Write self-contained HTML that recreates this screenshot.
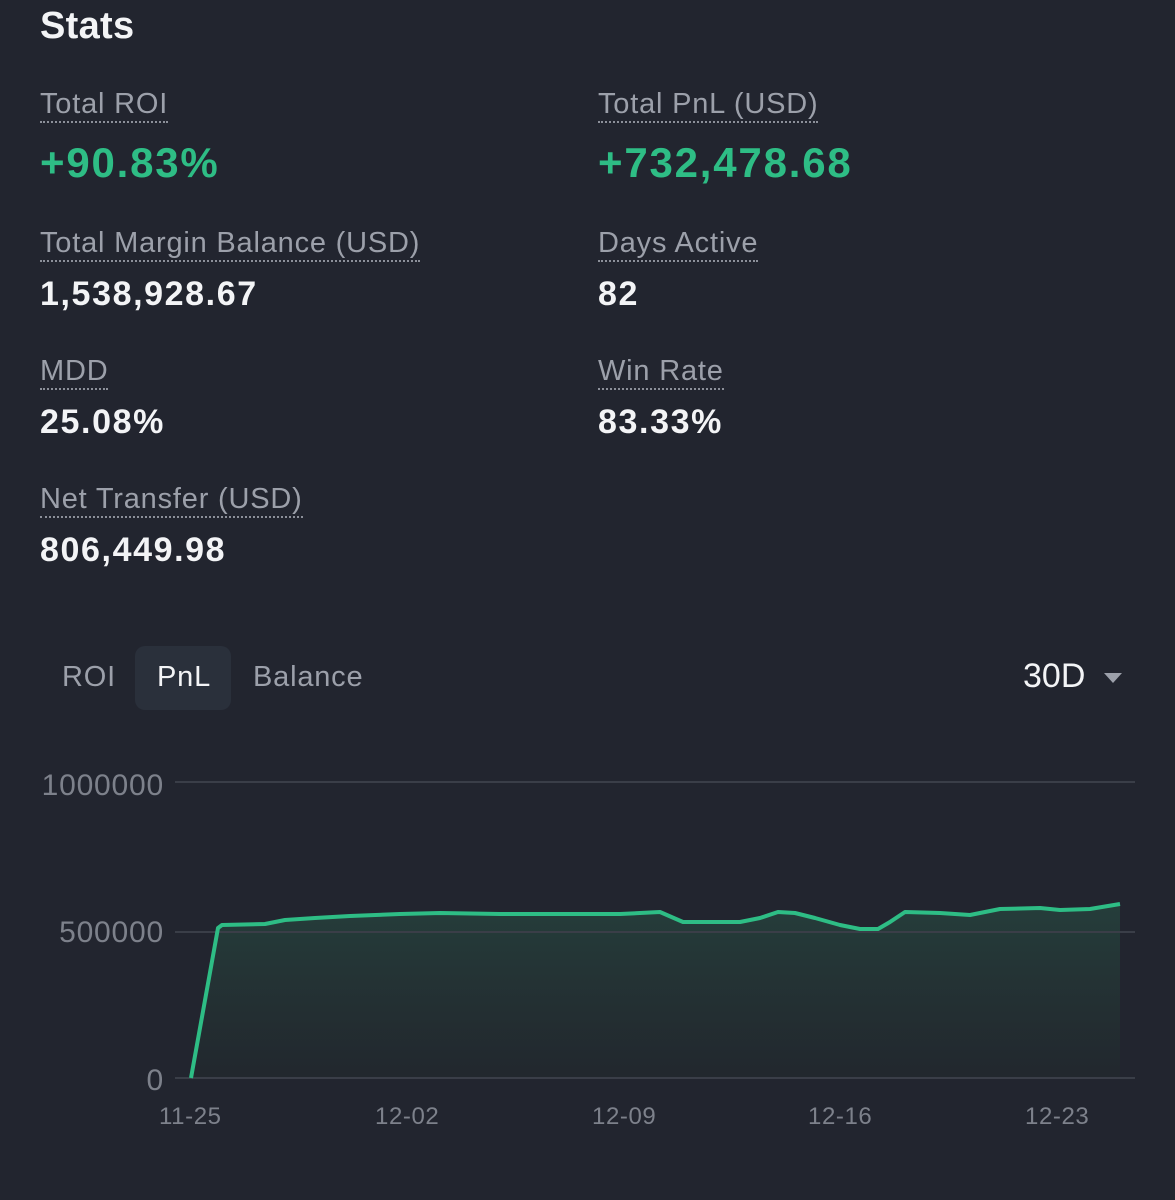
<!DOCTYPE html>
<html><head><meta charset="utf-8"><style>
body{margin:0;width:1175px;height:1200px;background:#22252f;font-family:"Liberation Sans",sans-serif;position:relative;overflow:hidden}
.a{position:absolute;white-space:nowrap}
.t{color:#f3f4f6;font-weight:bold;font-size:38px;left:40px;top:5px;letter-spacing:0.3px}
.l{color:#9ca0aa;font-size:29px;border-bottom:2px dotted #8c909a;line-height:30px;padding-bottom:2px;letter-spacing:0.8px}
.v{color:#f3f4f6;font-size:34px;font-weight:bold;letter-spacing:1.6px}
.g{color:#2ebd85;font-size:42px;font-weight:bold;letter-spacing:1.8px}
.tab{font-size:29px;color:#9ca0aa;letter-spacing:0.8px}
.ax{font-size:30px;color:#7d818b;letter-spacing:0.8px}
.xl{font-size:24px;color:#7d818b;letter-spacing:0.6px}
</style></head><body>
<div class="a t">Stats</div>
<div class="a l" style="left:40px;top:89px">Total ROI</div>
<div class="a g" style="left:40px;top:139px">+90.83%</div>
<div class="a l" style="left:598px;top:89px">Total PnL (USD)</div>
<div class="a g" style="left:598px;top:139px">+732,478.68</div>
<div class="a l" style="left:40px;top:228px">Total Margin Balance (USD)</div>
<div class="a v" style="left:40px;top:275px">1,538,928.67</div>
<div class="a l" style="left:598px;top:228px">Days Active</div>
<div class="a v" style="left:598px;top:275px">82</div>
<div class="a l" style="left:40px;top:356px">MDD</div>
<div class="a v" style="left:40px;top:403px">25.08%</div>
<div class="a l" style="left:598px;top:356px">Win Rate</div>
<div class="a v" style="left:598px;top:403px">83.33%</div>
<div class="a l" style="left:40px;top:484px">Net Transfer (USD)</div>
<div class="a v" style="left:40px;top:531px">806,449.98</div>
<div class="a tab" style="left:62px;top:661px">ROI</div>
<div class="a" style="left:135px;top:646px;width:96px;height:64px;background:#2a303b;border-radius:10px"></div>
<div class="a tab" style="left:157px;top:661px;color:#f3f4f6">PnL</div>
<div class="a tab" style="left:253px;top:661px">Balance</div>
<div class="a" style="left:1023px;top:657px;font-size:34px;color:#f3f4f6">30D</div>
<div class="a" style="left:1104px;top:673px;width:0;height:0;border-left:9px solid transparent;border-right:9px solid transparent;border-top:10px solid #9ca0aa"></div>
<svg class="a" style="left:0;top:0" width="1175" height="1200">
<defs><linearGradient id="f" x1="0" y1="0" x2="0" y2="1"><stop offset="0" stop-color="#26443e" stop-opacity=".8"/><stop offset="1" stop-color="#22292d" stop-opacity=".6"/></linearGradient></defs>
<line x1="175" y1="782" x2="1135" y2="782" stroke="#3a3e48" stroke-width="2"/>
<path d="M191,1078 L218,928 L222,925 L265,924 L285,920 L315,918 L350,916 L400,914 L440,913 L500,914 L620,914 L660,912 L683,922 L740,922 L760,918 L778,912 L795,913 L815,918 L840,925 L860,929 L878,929 L890,922 L905,912 L940,913 L970,915 L985,912 L1000,909 L1040,908 L1060,910 L1090,909 L1120,904 L1120,1078 Z" fill="url(#f)"/>
<line x1="175" y1="932" x2="1135" y2="932" stroke="#3a3e48" stroke-width="2"/>
<line x1="175" y1="1078" x2="1135" y2="1078" stroke="#3a3e48" stroke-width="2"/>
<path d="M191,1078 L218,928 L222,925 L265,924 L285,920 L315,918 L350,916 L400,914 L440,913 L500,914 L620,914 L660,912 L683,922 L740,922 L760,918 L778,912 L795,913 L815,918 L840,925 L860,929 L878,929 L890,922 L905,912 L940,913 L970,915 L985,912 L1000,909 L1040,908 L1060,910 L1090,909 L1120,904" fill="none" stroke="#2ebd85" stroke-width="4" stroke-linejoin="round"/>
</svg>
<div class="a ax" style="right:1011px;top:769px">1000000</div>
<div class="a ax" style="right:1011px;top:916px">500000</div>
<div class="a ax" style="right:1011px;top:1064px">0</div>
<div class="a xl" style="left:159px;top:1103px">11-25</div>
<div class="a xl" style="left:375px;top:1103px">12-02</div>
<div class="a xl" style="left:592px;top:1103px">12-09</div>
<div class="a xl" style="left:808px;top:1103px">12-16</div>
<div class="a xl" style="left:1025px;top:1103px">12-23</div>
</body></html>
